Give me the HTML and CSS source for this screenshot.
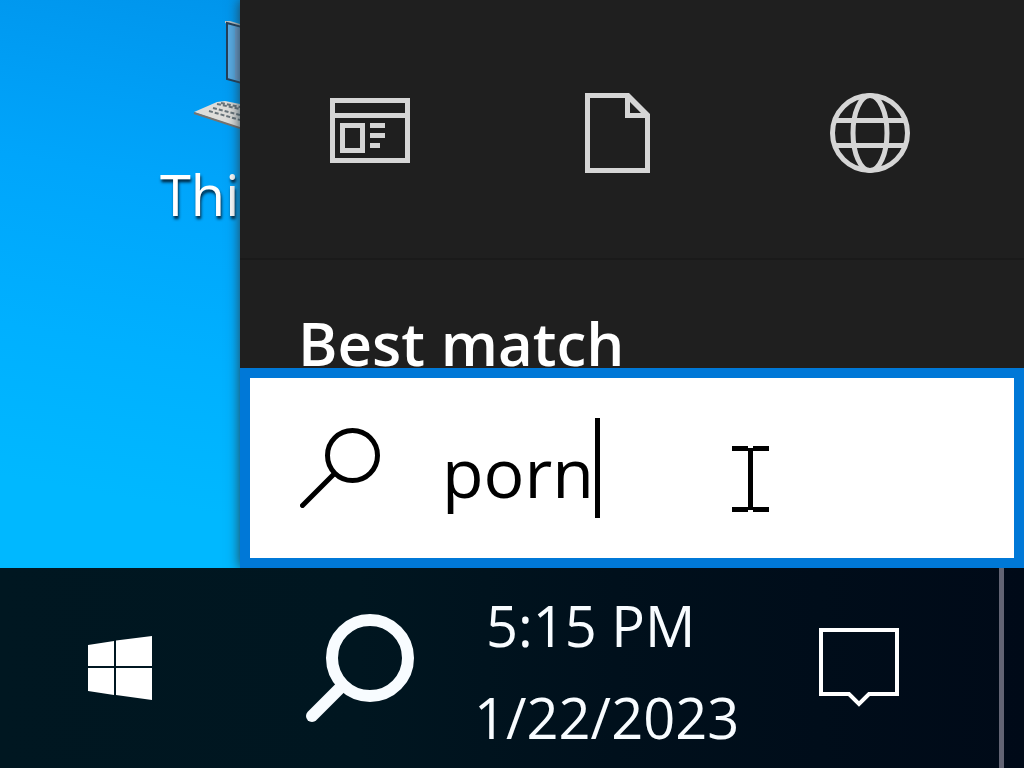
FILE: index.html
```html
<!DOCTYPE html>
<html lang="en">
<head>
<meta charset="utf-8">
<title>Desktop</title>
<link rel="stylesheet" href="styles.css">
</head>
<body>
<main class="workspace">
  <section class="wallpaper" aria-label="Desktop">
    <div class="shortcut">
      <svg class="shortcut-icon" viewBox="0 0 48 112" aria-hidden="true">
        <path d="M33 1h5l10 3v4L33 3z" fill="#b9c4c8"/>
        <path d="M35 3l15 4v56l-15-4z" fill="#59abe3" stroke="#243f59" stroke-width="2"/>
        <path d="M43 7l5 1v52l-5-1z" fill="#6e9fce"/>
        <path d="M2 92l23-10 8-1 15 3v24z" fill="#deddda"/>
        <path d="M2 93l46 15" stroke="#77736f" stroke-width="2"/>
        <path d="M25 84l23 5M21 88l27 7M17 91l31 9M29 83l19 4" stroke="#69747a" stroke-width="2" stroke-dasharray="4 2"/>
      </svg>
      <span class="shortcut-label">Thi</span>
    </div>
  </section>
  <section class="search-panel" aria-label="Search">
    <nav class="filters" aria-label="Search filters">
      <button class="filter" aria-label="Apps">
        <svg class="filter-icon" viewBox="0 0 80 80" aria-hidden="true">
          <path d="M0 5h80v65H0zM5 10v10h70V10zM5 25v40h70V25zM10 30h25v30H10zM15 35v20h15V35z" fill-rule="evenodd"/>
          <path d="M40 30h15v5H40zM40 40h15v5H40zM40 50h10v5H40z"/>
        </svg>
      </button>
      <button class="filter" aria-label="Documents">
        <svg class="filter-icon" viewBox="0 0 80 80" aria-hidden="true">
          <path d="M5 0h44l21 21v59H5zM10 5v70h55V25H45V5zM50 9v11h11z" fill-rule="evenodd"/>
        </svg>
      </button>
      <button class="filter" aria-label="Web">
        <svg class="filter-icon outline" viewBox="0 0 80 80" aria-hidden="true">
          <circle cx="40" cy="40" r="37.5"/>
          <ellipse cx="40" cy="40" rx="17" ry="37.5"/>
          <path d="M6 27.500h68M6 52.500h68"/>
        </svg>
      </button>
    </nav>
    <div class="results"><h2 class="results-title">Best match</h2></div>
    <label class="search-box">
      <svg class="search-icon" viewBox="0 0 80 80" aria-hidden="true">
        <circle cx="52.500" cy="27.500" r="25"/>
        <path d="M34 46L2.500 77.500"/>
      </svg>
      <input class="search-input" type="text" value="porn" aria-label="Search query">
      <span class="caret"></span>
      <svg class="pointer" viewBox="0 0 37 66" aria-hidden="true">
        <path d="M0 0h16v2h5V0h16v5H21v56h16v5H21v-2h-5v2H0v-5h16V5H0z"/>
      </svg>
    </label>
  </section>
</main>
<footer class="taskbar">
  <button class="task-button" aria-label="Start">
    <svg class="start-icon" viewBox="0 0 64 64" aria-hidden="true">
      <path d="M0 9l26-4v25H0zM28 4.500L64 0v30H28zM0 32h26v27L0 55zM28 32h36v32l-36-5z"/>
    </svg>
  </button>
  <button class="task-button" aria-label="Search">
    <svg class="task-search-icon" viewBox="0 0 108 108" aria-hidden="true">
      <circle cx="64" cy="44" r="38"/>
      <path d="M36 72L6 102"/>
    </svg>
  </button>
  <div class="clock">
    <time class="clock-time">5:15 PM</time>
    <time class="clock-date">1/22/2023</time>
  </div>
  <button class="task-button" aria-label="Notifications">
    <svg class="notice-icon" viewBox="0 0 80 80" aria-hidden="true">
      <path d="M2 2h76v64H50L40 76 30 66H2z"/>
    </svg>
  </button>
  <button class="show-desktop" aria-label="Show desktop"></button>
</footer>
</body>
</html>
```

FILE: styles.css
```css
* {
  box-sizing: border-box;
}

body {
  margin: 0;
  min-height: 100vh;
  display: grid;
  grid-template-rows: 1fr 200px;
  overflow: hidden;
  font-family: "Open Sans", "Noto Sans", sans-serif;
}

button {
  margin: 0;
  padding: 0;
  border: 0;
  background: none;
  font: inherit;
}

.workspace {
  display: grid;
  grid-template-columns: 240px 1fr;
}

.wallpaper {
  overflow: hidden;
  background: linear-gradient(190deg, #0095ec 0%, #009ef5 18%, #00a5fb 32%, #00b0ff 60%, #00b8ff 85%, #00b8ff 100%);
}

.shortcut {
  display: flex;
  flex-direction: column;
  align-items: flex-end;
  padding-top: 20px;
}

.shortcut-icon {
  width: 48px;
  height: 112px;
}

.shortcut-label {
  width: 80px;
  margin-top: 24px;
  color: #fff;
  font-size: 56px;
  line-height: 76px;
  text-shadow: 1px 3px 3px #00263f;
}

.search-panel {
  position: relative;
  display: flex;
  flex-direction: column;
  min-width: 0;
  background: #1f1f1f;
  box-shadow: 0 0 12px #263d48;
}

.filters {
  display: flex;
  padding: 88px 0 80px 5px;
  border-bottom: 2px solid #1a1a1a;
}

.filter {
  flex: 0 0 250px;
  display: flex;
  justify-content: center;
  padding: 5px 0;
}

.filter-icon {
  width: 80px;
  height: 80px;
  fill: #d5d5d5;
}

.outline {
  fill: none;
  stroke: #d5d5d5;
  stroke-width: 5;
}

.results {
  flex: 1 0 auto;
  padding: 58px 58px 0;
}

.results-title {
  margin: 0;
  color: #fff;
  font-size: 60px;
  font-weight: 600;
  line-height: 50px;
  white-space: nowrap;
}

.search-box {
  position: relative;
  display: flex;
  align-items: center;
  height: 200px;
  padding: 0 50px;
  border: 10px solid #0078d7;
  background: #fff;
}

.search-icon {
  flex: none;
  width: 80px;
  height: 80px;
  margin-right: 60px;
  fill: none;
  stroke: #000;
  stroke-width: 5;
  stroke-linecap: round;
}

.search-input {
  width: 155px;
  height: 100px;
  padding: 6px 0 0 2px;
  border: 0;
  outline: 0;
  background: none;
  color: #000;
  font: inherit;
  font-size: 68px;
}

.caret {
  width: 5px;
  height: 100px;
  background: #000;
}

.pointer {
  position: absolute;
  left: 482px;
  top: 68px;
  width: 37px;
  height: 66px;
}

.taskbar {
  position: relative;
  display: flex;
  background: linear-gradient(90deg, #001721 0%, #001620 35%, #00101c 60%, #000a18 100%);
  color: #f8fcff;
}

.task-button {
  flex: 0 0 240px;
  display: flex;
  align-items: center;
  justify-content: center;
}

.start-icon {
  width: 64px;
  height: 64px;
  fill: #fff;
}

.task-search-icon {
  width: 108px;
  height: 108px;
  fill: none;
  stroke: #f8fcff;
  stroke-width: 12;
  stroke-linecap: round;
}

.clock {
  flex: 0 0 265px;
  display: flex;
  flex-direction: column;
  justify-content: center;
  margin-left: -6px;
  padding-top: 5px;
  font-size: 56px;
  line-height: 92px;
  white-space: nowrap;
}

.clock-time {
  padding-left: 12px;
}

.notice-icon {
  width: 80px;
  height: 80px;
  fill: none;
  stroke: #fff;
  stroke-width: 4;
}

.show-desktop {
  width: 25px;
  margin-left: auto;
  border-left: 5px solid #626474;
}
```
